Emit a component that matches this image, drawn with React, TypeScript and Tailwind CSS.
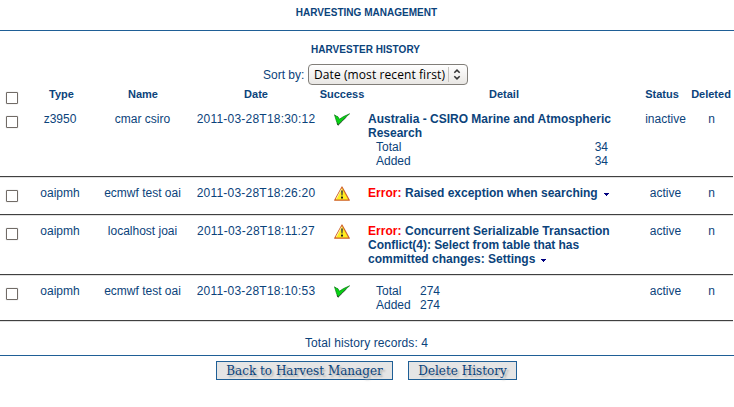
import React from "react";

const Tick = () => (
  <svg width="16" height="13" viewBox="0 0 16 13" className="shrink-0">
    <path d="M0.5 1.8 L2.2 3 L3.8 3.6 L5.4 6.2 L9.5 3.6 L15.6 0.8 L12 4 L8.3 7.6 L3.9 12 L2.4 8 Z" fill="#06d412" stroke="#0a7a14" strokeWidth="0.7" />
    <path d="M3.2 10.2 L4 12.3 L8.6 7.8 L12 4.4" fill="none" stroke="#173f19" strokeWidth="0.8" />
  </svg>
);

const Warning = () => (
  <svg width="16" height="15" viewBox="0 0 16 15" className="shrink-0">
    <path d="M8 1 L15.3 14.2 H0.7 Z" fill="#ffee20" stroke="#d0622c" strokeWidth="1.2" strokeLinejoin="round" />
    <path d="M7.7 2.8 L2.2 12.9" fill="none" stroke="#fffbd0" strokeWidth="0.8" />
    <path d="M7 4.6 H9 L8.6 9.5 H7.4 Z" fill="#55553f" />
    <rect x="7" y="10.6" width="2" height="2" rx="0.4" fill="#222" />
  </svg>
);

const Check = () => (
  <span className="block size-[12px] shrink-0 rounded-[1px] border border-[#716b66] bg-white shadow-[0_0_1px_#999]" />
);

const Caret = () => (
  <svg width="5" height="3" viewBox="0 0 5 3" className="ml-[6px] inline-block align-[1px]">
    <path d="M0 0 H5 V1 H4 V2 H3 V3 H2 V2 H1 V1 H0 Z" fill="#000080" />
  </svg>
);

const cols = "grid grid-cols-[24px_73px_92px_134px_38px_278px_54px_37px] whitespace-nowrap";

const Cell = ({ children, className = "" }: { children: React.ReactNode; className?: string }) => (
  <div className={"flex justify-center " + className}>{children}</div>
);

type RowProps = {
  type: string;
  name: string;
  date: string;
  ok?: boolean;
  status: string;
  height: string;
  children: React.ReactNode;
};

const Row = ({ type, name, date, ok, status, height, children }: RowProps) => (
  <div className={cols + " mr-px border-b border-[#404040] pt-[9px] shadow-[0_1px_0_#e0e0e0] " + height}>
    <div className="pt-[4px] pl-[6px]"><Check /></div>
    <Cell className="pr-px">{type}</Cell>
    <Cell className="pr-px">{name}</Cell>
    <Cell className="tracking-[0.22px]">{date}</Cell>
    <div className={ok ? "flex justify-center pt-[1px]" : "flex justify-center"}>{ok ? <Tick /> : <Warning />}</div>
    <div className="pl-[7px]">{children}</div>
    <Cell className="pr-px">{status}</Cell>
    <Cell>n</Cell>
  </div>
);

const Err = () => <span className="tracking-[0.05px] text-[#ff0000]">Error:</span>;

export default function App() {
  return (
    <div className="h-[407px] w-[734px] overflow-hidden bg-white font-['Liberation_Sans',Arial,sans-serif] text-[12px] leading-[14px] text-[#0b437b]">
      <header className="h-[31px] border-b border-[#1f5f96] pt-[6px] text-center text-[10px] font-bold">
        <h1 className="pr-px tracking-[0.02px]">HARVESTING MANAGEMENT</h1>
      </header>
      <h2 className="h-[33px] pt-[12px] pr-[3px] text-center text-[10px] font-bold tracking-[0.05px]">HARVESTER HISTORY</h2>
      <div className="flex h-[21px] pl-[263px]">
        <span className="w-[45px] pt-[4px] whitespace-nowrap">Sort by:</span>
        <div className="flex h-[21px] w-[160px] items-center rounded-[4px] border border-[#817e79] bg-linear-to-b from-white to-[#e9e7e4] pl-[5px] font-['Open_Sans','Noto_Sans',sans-serif] text-[12px] tracking-[0.09px] whitespace-nowrap text-black">
          <span className="w-[134px]">Date (most recent first)</span>
          <span className="h-[15px] w-px bg-[#c6c3be]" />
          <svg width="8" height="11" viewBox="0 0 8 11" className="ml-[4px]" fill="none" stroke="#333" strokeWidth="1.5">
            <path d="M1.3 3.8 L4 1.1 L6.7 3.8 M1.3 7.2 L4 9.9 L6.7 7.2" />
          </svg>
        </div>
      </div>
      <div className={cols + " h-[18px] pt-[2px] text-[11px] font-bold"}>
        <div className="pt-[5px] pl-[6px]"><Check /></div>
        <Cell className="pl-[2px]">Type</Cell>
        <Cell>Name</Cell>
        <Cell>Date</Cell>
        <Cell>Success</Cell>
        <Cell className="pl-[8px]">Detail</Cell>
        <Cell className="pr-[8px]">Status</Cell>
        <Cell className="pr-px">Deleted</Cell>
      </div>
      <Row type="z3950" name="cmar csiro" date="2011-03-28T18:30:12" ok status="inactive" height="h-[74px]">
        <div className="font-bold">Australia - CSIRO Marine and Atmospheric<br />Research</div>
        <div className="flex w-[240px] justify-between pl-[8px]"><span>Total</span><span>34</span></div>
        <div className="flex w-[240px] justify-between pl-[8px]"><span>Added</span><span>34</span></div>
      </Row>
      <Row type="oaipmh" name="ecmwf test oai" date="2011-03-28T18:26:20" status="active" height="h-[38px]">
        <div className="font-bold"><Err /> Raised exception when searching<Caret /></div>
      </Row>
      <Row type="oaipmh" name="localhost joai" date="2011-03-28T18:11:27" status="active" height="h-[60px]">
        <div className="font-bold"><Err /> Concurrent Serializable Transaction<br /><span className="tracking-[-0.04px]">Conflict(4): Select from table that has</span><br />committed changes: Settings<Caret /></div>
      </Row>
      <Row type="oaipmh" name="ecmwf test oai" date="2011-03-28T18:10:53" ok status="active" height="h-[46px]">
        <div className="grid grid-cols-[44px_auto] justify-start pl-[8px]">
          <span>Total</span><span>274</span><span>Added</span><span>274</span>
        </div>
      </Row>
      <p className="h-[35px] border-b border-[#1f5f96] pt-[15px] pr-px text-center tracking-[0.1px]">Total history records: 4</p>
      <div className="flex gap-[15px] pt-[5px] pl-[216px] font-['DejaVu_Serif',serif] text-[12px] leading-[17px] whitespace-nowrap">
        <button className="h-[19px] w-[177px] border border-[#1f5f96] bg-[#e5e5e5] pt-px [text-shadow:2px_2px_2px_#aaa]">Back to Harvest Manager</button>
        <button className="h-[19px] w-[109px] border border-[#1f5f96] bg-[#e5e5e5] pt-px [text-shadow:2px_2px_2px_#aaa]">Delete History</button>
      </div>
    </div>
  );
}
